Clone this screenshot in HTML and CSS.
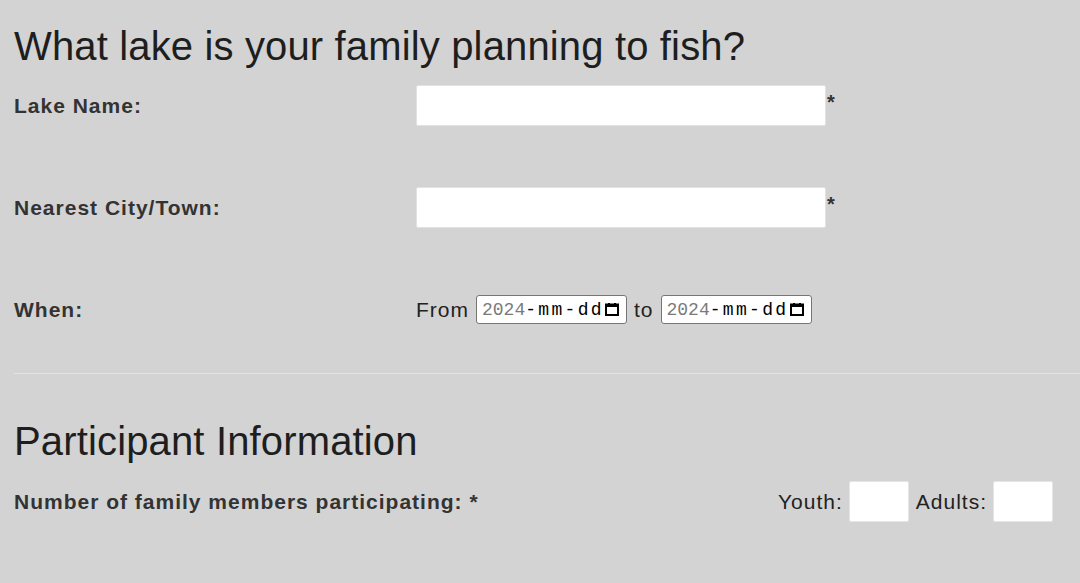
FILE: index.html
```html
<!DOCTYPE html>
<html>
<head>
<meta charset="utf-8">
<link rel="stylesheet" href="styles.css">
</head>
<body>
<div class="page">
  <h1 class="title">What lake is your family planning to fish?</h1>
  <div class="row first">
    <label class="label">Lake Name:</label>
    <div class="field"><span class="text-input"></span><span class="req">*</span></div>
  </div>
  <div class="row">
    <label class="label">Nearest City/Town:</label>
    <div class="field"><span class="text-input"></span><span class="req">*</span></div>
  </div>
  <div class="row last">
    <label class="label">When:</label>
    <div class="field dates">
      <span class="word">From</span>
      <span class="date-input"><span class="date-text"><span class="yr">2024</span><span class="md">-mm-d</span>d</span><svg class="cal" viewBox="0 0 14 13" width="14" height="13"><rect x="1" y="1.5" width="12" height="10.5" fill="none" stroke="#000" stroke-width="2"/><rect x="1" y="1" width="12" height="3" fill="#000"/><rect x="3" y="0" width="2" height="2" fill="#000"/><rect x="9" y="0" width="2" height="2" fill="#000"/></svg></span>
      <span class="word">to</span>
      <span class="date-input"><span class="date-text"><span class="yr">2024</span><span class="md">-mm-d</span>d</span><svg class="cal" viewBox="0 0 14 13" width="14" height="13"><rect x="1" y="1.5" width="12" height="10.5" fill="none" stroke="#000" stroke-width="2"/><rect x="1" y="1" width="12" height="3" fill="#000"/><rect x="3" y="0" width="2" height="2" fill="#000"/><rect x="9" y="0" width="2" height="2" fill="#000"/></svg></span>
    </div>
  </div>
  <hr class="divider">
  <h1 class="title second">Participant Information</h1>
  <div class="count-row">
    <label class="label">Number of family members participating: *</label>
    <div class="counts">
      <span class="word">Youth:</span><span class="small-input"></span>
      <span class="word">Adults:</span><span class="small-input"></span>
    </div>
  </div>
</div>
</body>
</html>
```
FILE: styles.css
```css
html, body {
  margin: 0;
  padding: 0;
  background: #d3d3d3;
}
.page {
  padding: 0 27px 0 14px;
  font-family: "Liberation Sans", Arial, sans-serif;
  color: #222;
}
.title {
  font-size: 40px;
  font-weight: normal;
  letter-spacing: 0.15px;
  margin: 0;
  padding-top: 23px;
  line-height: 46px;
  color: #1e1e1e;
}
.row {
  display: grid;
  grid-template-columns: 402px auto;
  align-items: center;
  height: 41px;
  margin-bottom: 61px;
}
.row.first {
  margin-top: 16px;
}
.row.last {
  margin-bottom: 0;
}
.label {
  font-weight: bold;
  font-size: 21px;
  letter-spacing: 1px;
  color: #333;
}
.field {
  display: flex;
  align-items: flex-start;
}
.text-input {
  display: block;
  width: 408px;
  height: 39px;
  background: #fff;
  border: 1px solid #e2e2e2;
  border-radius: 2px;
}
.req {
  font-weight: bold;
  font-size: 20px;
  line-height: 1;
  color: #333;
  margin-left: 1px;
  margin-top: 7px;
}
.dates {
  align-items: center;
  gap: 7px;
}
.word {
  font-size: 21px;
  letter-spacing: 1px;
  color: #222;
}
.date-input {
  display: flex;
  align-items: center;
  width: 138px;
  height: 27px;
  padding: 0 6px 0 5px;
  background: #fff;
  border: 1px solid #767676;
  border-radius: 3px;
}
.date-text {
  width: 122px;
  flex: none;
  white-space: nowrap;
  font-family: "Liberation Mono", "Courier New", monospace;
  font-size: 18px;
  color: #000;
}
.yr {
  color: #7a7a7a;
}
.md {
  color: #000;
  letter-spacing: 2.3px;
}
.cal {
  flex: none;
  margin-left: 1px;
}
.divider {
  border: 0;
  border-top: 1px solid #e4e4e4;
  margin: 43px -27px 0 0;
  height: 0;
}
.title.second {
  padding-top: 44px;
}
.count-row {
  display: flex;
  justify-content: space-between;
  align-items: center;
  margin-top: 17px;
  height: 41px;
}
.counts {
  display: flex;
  align-items: center;
}
.small-input {
  display: block;
  box-sizing: border-box;
  width: 60px;
  height: 41px;
  background: #fff;
  border: 1px solid #e6e6e6;
  border-radius: 2px;
  margin-left: 6px;
  margin-right: 7px;
}
.small-input:last-child {
  margin-right: 0;
}
```
